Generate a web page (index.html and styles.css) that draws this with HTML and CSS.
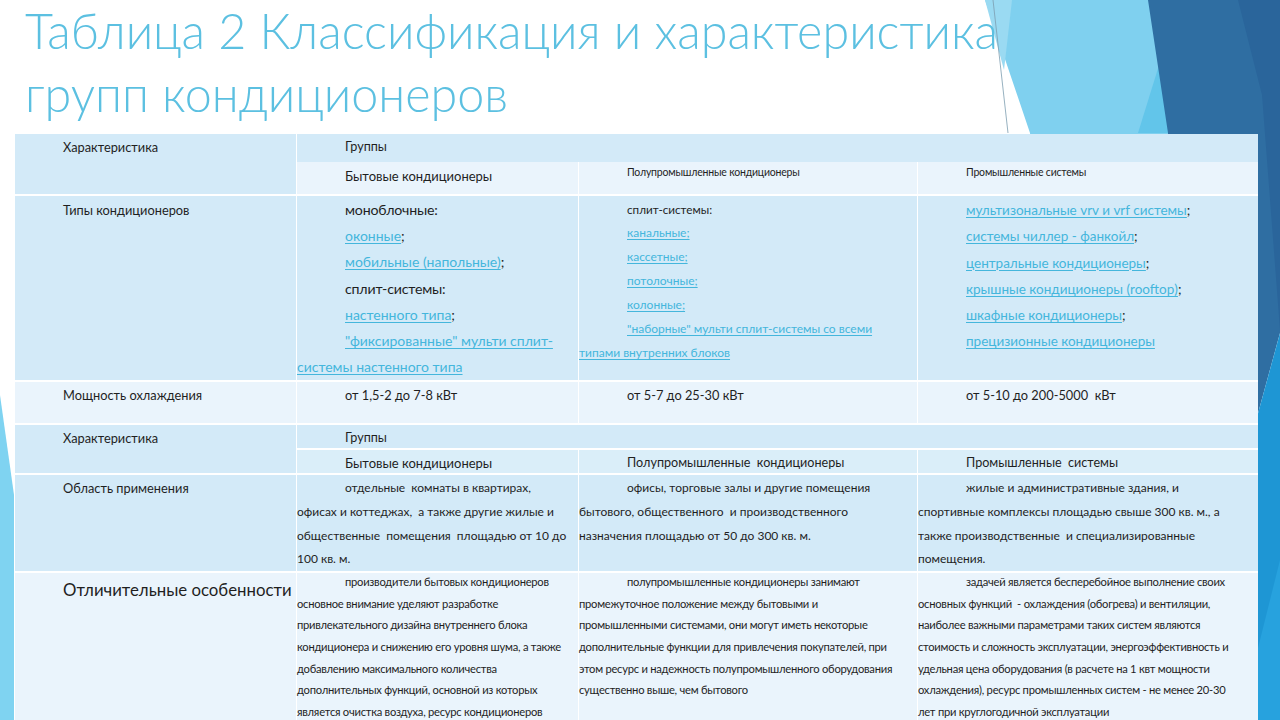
FILE: index.html
```html
<!DOCTYPE html>
<html lang="ru">
<head>
<meta charset="utf-8">
<title>Таблица 2</title>
<link rel="stylesheet" href="styles.css">
</head>
<body>
<div class="slide">
  <svg class="deco" width="1280" height="720" viewBox="0 0 1280 720" aria-hidden="true">
    <polygon points="985,0 1150,0 1172,133 1210,720 1090,720 1030,133" fill="#7fd0ef"/>
    <polygon points="985,0 1012,0 1004,70" fill="#9adaf2"/>
    <polygon points="1138,133 1160,62 1172,133" fill="#62c5ea"/>
    <line x1="993" y1="0" x2="1008" y2="133" stroke="#7c9db0" stroke-width="0.8"/>
    <polygon points="1148,0 1280,0 1280,333 1174,720 1150,720 1168,133" fill="#2f6ea2"/>
    <polygon points="1238,0 1280,0 1280,330 1262,95" fill="#2a659b"/>
    <polygon points="1280,333 1280,720 1174,720" fill="#1e96d4"/>
    <polygon points="1280,560 1280,720 1240,720" fill="#27a2de"/>
    <polygon points="0,395 14,495 14,720 0,720" fill="#7fd3f1"/>
  </svg>

  <h1 class="title">Таблица 2 Классификация и характеристика групп кондиционеров</h1>

  <table class="grid">
    <colgroup>
      <col class="c1"><col class="c2"><col class="c3"><col class="c4">
    </colgroup>
    <tr class="r-head1">
      <td class="lab dark" rowspan="2"><p class="lab-p pt3">Характеристика</p></td>
      <td class="dark last" colspan="3"><p class="p hd-grp pt3">Группы</p></td>
    </tr>
    <tr class="r-head2">
      <td class="light nosep"><p class="p hd pt4">Бытовые кондиционеры</p></td>
      <td class="light nosep"><p class="p hd-sm">Полупромышленные кондиционеры</p></td>
      <td class="light nosep last"><p class="p hd-sm">Промышленные системы</p></td>
    </tr>
    <tr class="r-types">
      <td class="lab dark"><p class="lab-p pt4">Типы кондиционеров</p></td>
      <td class="dark types2">
        <p class="p big">моноблочные:</p>
        <p class="p"><a href="#">оконные</a>;</p>
        <p class="p"><a href="#">мобильные (напольные)</a>;</p>
        <p class="p big">сплит-системы:</p>
        <p class="p"><a href="#">настенного типа</a>;</p>
        <p class="p"><a href="#">"фиксированные" мульти сплит-системы настенного типа</a></p>
      </td>
      <td class="dark types3">
        <p class="p mid">сплит-системы:</p>
        <p class="p"><a href="#">канальные;</a></p>
        <p class="p"><a href="#">кассетные;</a></p>
        <p class="p"><a href="#">потолочные;</a></p>
        <p class="p"><a href="#">колонные;</a></p>
        <p class="p nw"><a href="#">"наборные" мульти сплит-системы со всеми<br>типами внутренних блоков</a></p>
      </td>
      <td class="dark types4 last">
        <p class="p"><a href="#">мультизональные vrv и vrf системы</a>;</p>
        <p class="p"><a href="#">системы чиллер - фанкойл</a>;</p>
        <p class="p"><a href="#">центральные кондиционеры</a>;</p>
        <p class="p"><a href="#">крышные кондиционеры (rooftop)</a>;</p>
        <p class="p"><a href="#">шкафные кондиционеры</a>;</p>
        <p class="p"><a href="#">прецизионные кондиционеры</a></p>
      </td>
    </tr>
    <tr class="r-power">
      <td class="lab light"><p class="lab-p pt3">Мощность охлаждения</p></td>
      <td class="light"><p class="p pw pt3">от 1,5-2 до 7-8 кВт</p></td>
      <td class="light"><p class="p pw pt3">от 5-7 до 25-30 кВт</p></td>
      <td class="light last"><p class="p pw pt3">от 5-10 до 200-5000&nbsp; кВт</p></td>
    </tr>
    <tr class="r-head3">
      <td class="lab dark" rowspan="2"><p class="lab-p lh18 pt4">Характеристика</p></td>
      <td class="dark last" colspan="3"><p class="p hd-grp lh18 pt3">Группы</p></td>
    </tr>
    <tr class="r-head4">
      <td class="mid-bg"><p class="p hd lh18 pt3">Бытовые кондиционеры</p></td>
      <td class="mid-bg"><p class="p hd2 lh18 pt3">Полупромышленные&nbsp; кондиционеры</p></td>
      <td class="mid-bg last"><p class="p hd2 lh18 pt3">Промышленные&nbsp; системы</p></td>
    </tr>
    <tr class="r-area">
      <td class="lab dark"><p class="lab-p pt3">Область применения</p></td>
      <td class="dark area"><p class="p">отдельные&nbsp; комнаты в квартирах,<br>офисах и коттеджах,&nbsp; а также другие жилые и<br>общественные&nbsp; помещения&nbsp; площадью от 10 до<br>100 кв. м.</p></td>
      <td class="dark area"><p class="p">офисы, торговые залы и другие помещения<br>бытового, общественного&nbsp; и производственного<br>назначения площадью от 50 до 300 кв. м.</p></td>
      <td class="dark area last"><p class="p">жилые и административные здания, и<br>спортивные комплексы площадью свыше 300 кв. м., а<br>также производственные&nbsp; и специализированные<br>помещения.</p></td>
    </tr>
    <tr class="r-feat">
      <td class="lab light"><p class="lab-p feat-lab">Отличительные особенности</p></td>
      <td class="light feat"><p class="p">производители бытовых кондиционеров<br>основное внимание уделяют разработке<br>привлекательного дизайна внутреннего блока<br>кондиционера и снижению его уровня шума, а также<br>добавлению максимального количества<br>дополнительных функций, основной из которых<br>является очистка воздуха, ресурс кондиционеров</p></td>
      <td class="light feat"><p class="p">полупромышленные кондиционеры занимают<br>промежуточное положение между бытовыми и<br>промышленными системами, они могут иметь некоторые<br>дополнительные функции для привлечения покупателей, при<br>этом ресурс и надежность полупромышленного оборудования<br>существенно выше, чем бытового</p></td>
      <td class="light feat last"><p class="p">задачей является бесперебойное выполнение своих<br>основных функций&nbsp; - охлаждения (обогрева) и вентиляции,<br>наиболее важными параметрами таких систем являются<br>стоимость и сложность эксплуатации, энергоэффективность и<br>удельная цена оборудования (в расчете на 1 квт мощности<br>охлаждения), ресурс промышленных систем - не менее 20-30<br>лет при круглогодичной эксплуатации</p></td>
    </tr>
  </table>
</div>
</body>
</html>
```

FILE: styles.css
```css
* { box-sizing: border-box; }

html, body {
  margin: 0;
  padding: 0;
  background: #ffffff;
}

body {
  font-family: Lato, "Open Sans", "Liberation Sans", sans-serif;
  color: #1f1f1f;
}

.slide {
  position: relative;
  width: 1280px;
  height: 720px;
  overflow: hidden;
  background: #ffffff;
}

.deco {
  position: absolute;
  left: 0;
  top: 0;
  z-index: 0;
}

.title {
  position: relative;
  z-index: 1;
  margin: -1px 0 0 25px;
  width: 1010px;
  font-family: Lato, "Open Sans", sans-serif;
  font-weight: 300;
  font-size: 48.5px;
  line-height: 63px;
  color: #5cc0e1;
}

.grid {
  position: relative;
  z-index: 1;
  margin: 9px 0 0 15px;
  width: 1243px;
  border-collapse: separate;
  border-spacing: 0;
  table-layout: fixed;
}

.c1 { width: 282px; }
.c2 { width: 282px; }
.c3 { width: 339px; }
.c4 { width: 340px; }

.grid td {
  padding: 0;
  vertical-align: top;
  border-right: 1px solid #ffffff;
  border-top: 2px solid #ffffff;
}

.grid td.last { border-right: 0; }
.grid tr:first-child td { border-top: 0; }
.grid td.nosep { border-top: 0; }

.dark { background: #d3eaf8; }
.light { background: #eaf4fc; }
.mid-bg { background: #daeef9; }

.r-head1 { height: 28px; }
.r-head2 { height: 32px; }
.r-types { height: 186px; }
.r-power { height: 43px; }
.r-head3 { height: 23px; }
.r-head4 { height: 23px; }
.r-area { height: 97px; }
.r-feat { height: 160px; }

.p {
  margin: 0;
  text-indent: 48px;
}

.nw { white-space: nowrap; }

.lab-p {
  margin: 0;
  padding-left: 48px;
  font-size: 12.8px;
  line-height: 20px;
}

.lh18 { line-height: 18px; }

.pt2 { padding-top: 2px; }
.pt3 { padding-top: 3px; }
.pt4 { padding-top: 4px; }
.pt5 { padding-top: 5px; }

.hd {
  font-size: 13px;
  line-height: 20px;
}

.hd2 {
  font-size: 12.6px;
  line-height: 20px;
}

.hd-grp {
  font-size: 12.6px;
  line-height: 20px;
}

.hd-sm {
  font-size: 10.5px;
  line-height: 16px;
  padding-top: 2px;
  letter-spacing: -0.2px;
}

.pw {
  font-size: 12.8px;
  line-height: 20px;
}

a {
  color: #44b6dc;
  text-decoration: underline;
  text-decoration-thickness: 1px;
  text-underline-offset: 2px;
}

.types2 .p {
  font-size: 14px;
  line-height: 26.2px;
}
.types2 .p.big { font-size: 14.2px; letter-spacing: -0.2px; }
.types2 .p:first-child { padding-top: 1px; }

.types3 .p {
  font-size: 12px;
  line-height: 24px;
}
.types3 .p.mid { font-size: 11.7px; }
.types3 .p:first-child { padding-top: 1px; }

.types4 .p {
  font-size: 13.5px;
  line-height: 26.3px;
}
.types4 .p:first-child { padding-top: 1px; }

.area .p {
  font-size: 12px;
  line-height: 23.6px;
  padding-top: 1px;
  white-space: nowrap;
}

.feat-lab {
  font-size: 16.8px;
  line-height: 22px;
  padding-top: 6px;
  white-space: nowrap;
}

.feat .p {
  margin-top: -2px;
  font-size: 11.2px;
  line-height: 21.7px;
  letter-spacing: -0.25px;
  white-space: nowrap;
}
```
